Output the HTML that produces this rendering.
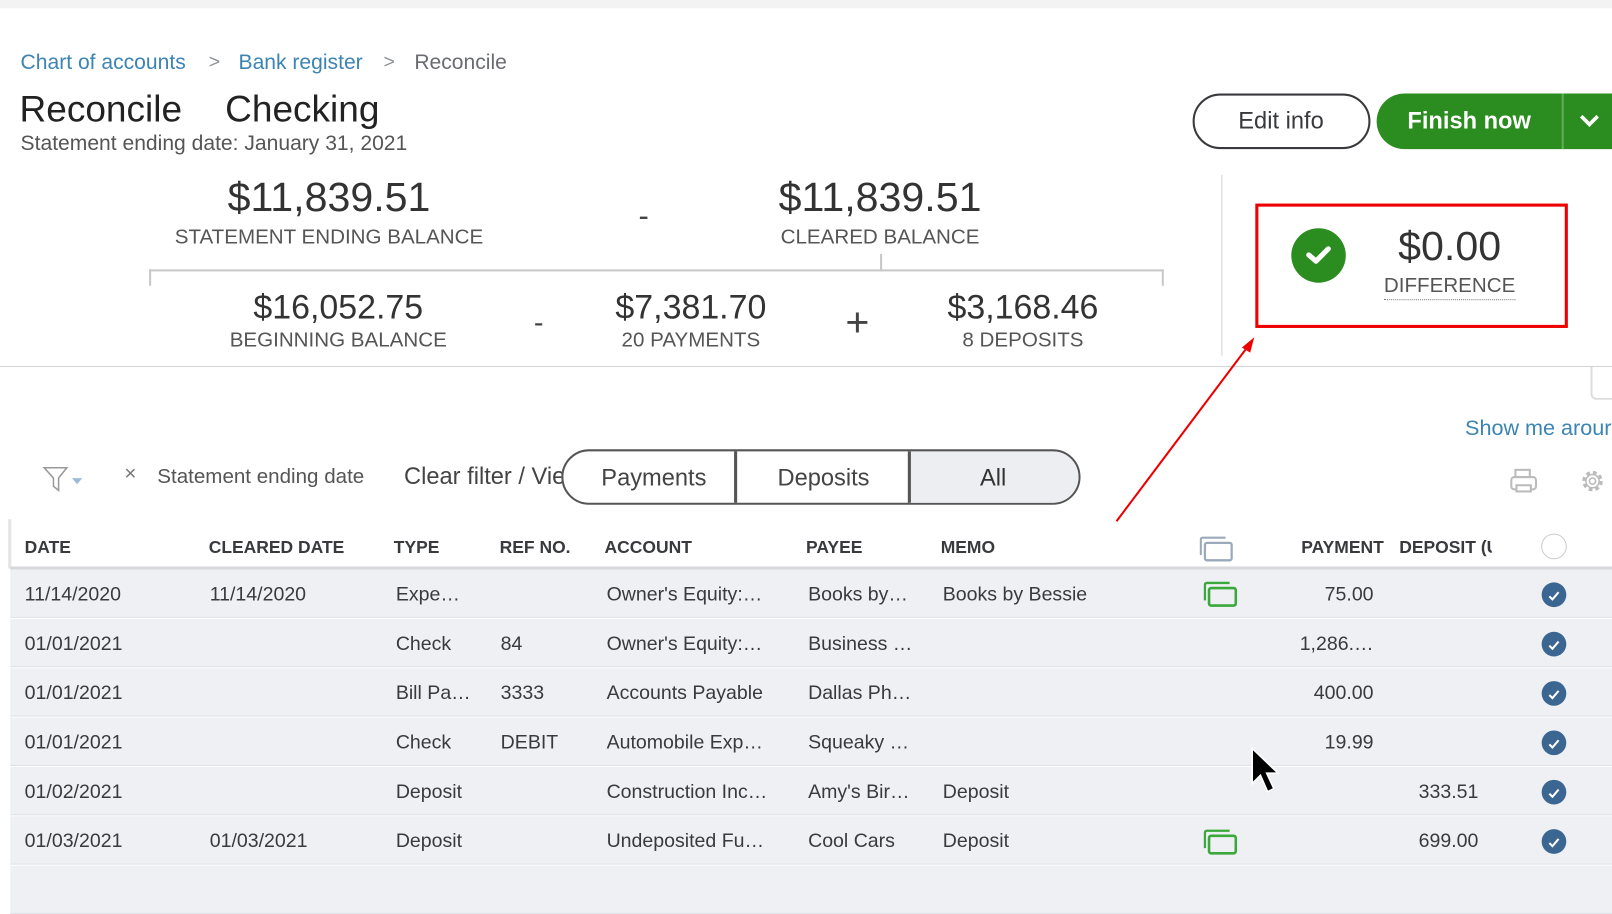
<!DOCTYPE html>
<html><head><meta charset="utf-8"><style>
*{margin:0;padding:0;box-sizing:border-box}
body{width:1612px;height:877px;overflow:hidden;background:#fff;font-family:"Liberation Sans",sans-serif;color:#393a3d;position:relative}
#w{position:absolute;left:0;top:0;width:1568px;height:853px;transform:scale(1.0281);transform-origin:0 0}
.a{position:absolute;white-space:nowrap;line-height:1}
.c{transform:translateX(-50%)}
.r{transform:translateX(-100%)}
.hd{font-weight:bold;font-size:17px;color:#393a3d}
.td{font-size:19px;color:#393a3d}
.row{position:absolute;left:10px;width:1602px;height:47px;background:#eef0f3;border-bottom:1px solid #dfe2e6}
</style></head><body><div id="w">
<div style="position:absolute;left:0;top:0;width:1612px;height:8px;background:#f3f3f4"></div>
<div class="a" style="left:20px;top:51px;font-size:20.5px;color:#3b84b3">Chart of accounts</div>
<div class="a" style="left:203px;top:51px;font-size:19px;color:#8d9096">&gt;</div>
<div class="a" style="left:232px;top:51px;font-size:20.5px;color:#3b84b3">Bank register</div>
<div class="a" style="left:373px;top:51px;font-size:19px;color:#8d9096">&gt;</div>
<div class="a" style="left:403px;top:51px;font-size:20.5px;color:#6b6c72">Reconcile</div>
<div class="a" style="left:19px;top:88px;font-size:36px;color:#222">Reconcile</div>
<div class="a" style="left:219px;top:88px;font-size:36px;color:#222">Checking</div>
<div class="a" style="left:20px;top:130px;font-size:20.5px;color:#555">Statement ending date: January 31, 2021</div>

<div class="a c" style="left:320px;top:172px;font-size:40px;color:#333">$11,839.51</div>
<div class="a c" style="left:320px;top:221px;font-size:20px;color:#555">STATEMENT ENDING BALANCE</div>
<div class="a c" style="left:626px;top:196px;font-size:30px;color:#444">-</div>
<div class="a c" style="left:856px;top:172px;font-size:40px;color:#333">$11,839.51</div>
<div class="a c" style="left:856px;top:221px;font-size:20px;color:#555">CLEARED BALANCE</div>
<div style="position:absolute;left:856px;top:247px;width:2px;height:17px;background:#c8c8c8"></div>
<div style="position:absolute;left:145px;top:262px;width:987px;height:2px;background:#c8c8c8"></div>
<div style="position:absolute;left:145px;top:262px;width:2px;height:16px;background:#c8c8c8"></div>
<div style="position:absolute;left:1130px;top:262px;width:2px;height:16px;background:#c8c8c8"></div>
<div class="a c" style="left:329px;top:282px;font-size:33px;color:#333">$16,052.75</div>
<div class="a c" style="left:329px;top:321px;font-size:20px;color:#555">BEGINNING BALANCE</div>
<div class="a c" style="left:524px;top:300px;font-size:28px;color:#444">-</div>
<div class="a c" style="left:672px;top:282px;font-size:33px;color:#333">$7,381.70</div>
<div class="a c" style="left:672px;top:321px;font-size:20px;color:#555">20 PAYMENTS</div>
<div class="a c" style="left:834px;top:294px;font-size:40px;color:#444">+</div>
<div class="a c" style="left:995px;top:282px;font-size:33px;color:#333">$3,168.46</div>
<div class="a c" style="left:995px;top:321px;font-size:20px;color:#555">8 DEPOSITS</div>

<div style="position:absolute;left:1188px;top:170px;width:1px;height:176px;background:#d4d4d4"></div>
<div style="position:absolute;left:0;top:356px;width:1594px;height:1px;background:#d4d4d4"></div>
<div style="position:absolute;left:1547px;top:357px;width:30px;height:32px;border-left:2px solid #ddd;border-bottom:2px solid #ddd;border-bottom-left-radius:6px"></div>

<div style="position:absolute;left:1160px;top:91px;width:173px;height:54px;border:2.5px solid #393a3d;border-radius:27px"></div>
<div class="a c" style="left:1246px;top:106px;font-size:23px;color:#393a3d">Edit info</div>
<div style="position:absolute;left:1339px;top:91px;width:290px;height:54px;background:#2b8c1f;border-radius:27px"></div>
<div style="position:absolute;left:1519px;top:91px;width:2px;height:54px;background:#5fae55"></div>
<div class="a c" style="left:1429px;top:106px;font-size:23px;font-weight:bold;color:#fff">Finish now</div>
<svg class="a" style="left:1535px;top:108px" width="22" height="18"><path d="M3 5 L11 13 L19 5" stroke="#fff" stroke-width="3.5" fill="none"/></svg>

<div style="position:absolute;left:1221px;top:198px;width:304px;height:121px;border:3px solid #ee0000"></div>
<div style="position:absolute;left:1256px;top:222px;width:53px;height:53px;border-radius:50%;background:#2b8c1f"></div>
<svg class="a" style="left:1268px;top:235px" width="30" height="26"><path d="M5 13 L12 19 L24 7" stroke="#fff" stroke-width="5" fill="none" stroke-linecap="round" stroke-linejoin="round"/></svg>
<div class="a c" style="left:1410px;top:220px;font-size:40px;color:#333">$0.00</div>
<div class="a c" style="left:1410px;top:268px;font-size:20px;color:#555;border-bottom:1px dotted #777;padding-bottom:3px">DIFFERENCE</div>
<svg class="a" style="left:1080px;top:322px" width="150" height="190"><path d="M6 185 L136 12" stroke="#ee0000" stroke-width="2"/><path d="M140 6 L128 16 L136 21 Z" fill="#ee0000"/></svg>

<div class="a" style="left:1425px;top:406px;font-size:21px;color:#3b84b3">Show me arour</div>

<svg class="a" style="left:40px;top:452px" width="46" height="28"><path d="M3 3 H25 L17 13 V25 L12 21 V13 Z" stroke="#999" stroke-width="1.5" fill="none"/><path d="M30 13 H40 L35 19 Z" fill="#9bbbd8"/></svg>
<div class="a" style="left:121px;top:451px;font-size:20px;color:#777">×</div>
<div class="a" style="left:153px;top:454px;font-size:20px;color:#555">Statement ending date</div>
<div class="a" style="left:393px;top:452px;font-size:23px;color:#444;width:155px;overflow:hidden">Clear filter / View all</div>
<div style="position:absolute;left:546px;top:437px;width:505px;height:54px;border:2.5px solid #555;border-radius:27px;overflow:hidden;background:#fff">
<div style="position:absolute;left:336px;top:0;width:170px;height:54px;background:#eceef1"></div>
<div style="position:absolute;left:166px;top:0;width:2.5px;height:54px;background:#555"></div>
<div style="position:absolute;left:335px;top:0;width:2.5px;height:54px;background:#555"></div>
</div>
<div class="a c" style="left:636px;top:453px;font-size:23px;color:#444">Payments</div>
<div class="a c" style="left:801px;top:453px;font-size:23px;color:#444">Deposits</div>
<div class="a c" style="left:966px;top:453px;font-size:23px;color:#333">All</div>
<svg class="a" style="left:1467px;top:454px" width="30" height="28"><rect x="7" y="3" width="14" height="7" fill="none" stroke="#bbb" stroke-width="2"/><rect x="3" y="10" width="24" height="12" rx="3" fill="none" stroke="#bbb" stroke-width="2"/><rect x="8" y="18" width="14" height="6" fill="#fff" stroke="#bbb" stroke-width="2"/></svg>
<svg class="a" style="left:1535px;top:454px" width="28" height="28"><circle cx="14" cy="14" r="8" fill="none" stroke="#bbb" stroke-width="4" stroke-dasharray="3.5 2.8"/><circle cx="14" cy="14" r="6.5" fill="none" stroke="#bbb" stroke-width="1.5"/><circle cx="14" cy="14" r="3" fill="none" stroke="#bbb" stroke-width="1.5"/></svg>

<div style="position:absolute;left:8px;top:505px;width:3px;height:48px;background:#e4e4e4"></div>
<div style="position:absolute;left:10px;top:551px;width:1602px;height:3px;background:#d6d8db"></div>
<div class="a hd" style="left:24px;top:524px">DATE</div>
<div class="a hd" style="left:203px;top:524px">CLEARED DATE</div>
<div class="a hd" style="left:383px;top:524px">TYPE</div>
<div class="a hd" style="left:486px;top:524px">REF NO.</div>
<div class="a hd" style="left:588px;top:524px">ACCOUNT</div>
<div class="a hd" style="left:784px;top:524px">PAYEE</div>
<div class="a hd" style="left:915px;top:524px">MEMO</div>
<svg class="a" style="left:1166px;top:520px" width="34" height="28"><path d="M2 20 V5 Q2 3 4 3 H26" stroke="#9aaabb" stroke-width="2" fill="none"/><rect x="6" y="8" width="26" height="17" rx="2" fill="none" stroke="#9aaabb" stroke-width="2.2"/></svg>
<div class="a hd r" style="left:1346px;top:524px">PAYMENT</div>
<div class="a hd" style="left:1361px;top:524px;width:90px;overflow:hidden">DEPOSIT (USD)</div>
<div style="position:absolute;left:1499px;top:519px;width:25px;height:25px;border-radius:50%;border:1px solid #ccc"></div>

<div class="row" style="top:554px"></div>
<div class="row" style="top:602px"></div>
<div class="row" style="top:650px"></div>
<div class="row" style="top:698px"></div>
<div class="row" style="top:746px"></div>
<div class="row" style="top:794px"></div>
<div class="row" style="top:842px"></div>

<div class="a td" style="left:24px;top:569px">11/14/2020</div><div class="a td" style="left:204px;top:569px">11/14/2020</div><div class="a td" style="left:385px;top:569px">Expe…</div><div class="a td" style="left:590px;top:569px">Owner's Equity:…</div><div class="a td" style="left:786px;top:569px">Books by…</div><div class="a td" style="left:917px;top:569px">Books by Bessie</div><div class="a td r" style="left:1336px;top:569px">75.00</div>
<div class="a td" style="left:24px;top:617px">01/01/2021</div><div class="a td" style="left:385px;top:617px">Check</div><div class="a td" style="left:487px;top:617px">84</div><div class="a td" style="left:590px;top:617px">Owner's Equity:…</div><div class="a td" style="left:786px;top:617px">Business …</div><div class="a td r" style="left:1336px;top:617px">1,286.…</div>
<div class="a td" style="left:24px;top:665px">01/01/2021</div><div class="a td" style="left:385px;top:665px">Bill Pa…</div><div class="a td" style="left:487px;top:665px">3333</div><div class="a td" style="left:590px;top:665px">Accounts Payable</div><div class="a td" style="left:786px;top:665px">Dallas Ph…</div><div class="a td r" style="left:1336px;top:665px">400.00</div>
<div class="a td" style="left:24px;top:713px">01/01/2021</div><div class="a td" style="left:385px;top:713px">Check</div><div class="a td" style="left:487px;top:713px">DEBIT</div><div class="a td" style="left:590px;top:713px">Automobile Exp…</div><div class="a td" style="left:786px;top:713px">Squeaky …</div><div class="a td r" style="left:1336px;top:713px">19.99</div>
<div class="a td" style="left:24px;top:761px">01/02/2021</div><div class="a td" style="left:385px;top:761px">Deposit</div><div class="a td" style="left:590px;top:761px">Construction Inc…</div><div class="a td" style="left:786px;top:761px">Amy's Bir…</div><div class="a td" style="left:917px;top:761px">Deposit</div><div class="a td r" style="left:1438px;top:761px">333.51</div>
<div class="a td" style="left:24px;top:809px">01/03/2021</div><div class="a td" style="left:204px;top:809px">01/03/2021</div><div class="a td" style="left:385px;top:809px">Deposit</div><div class="a td" style="left:590px;top:809px">Undeposited Fu…</div><div class="a td" style="left:786px;top:809px">Cool Cars</div><div class="a td" style="left:917px;top:809px">Deposit</div><div class="a td r" style="left:1438px;top:809px">699.00</div>

<svg class="a" style="left:1170px;top:564px" width="34" height="28"><path d="M2 20 V5 Q2 3 4 3 H26" stroke="#3aa83a" stroke-width="2.2" fill="none"/><rect x="6" y="8" width="26" height="17" rx="2" fill="none" stroke="#3aa83a" stroke-width="2.5"/></svg>
<svg class="a" style="left:1170px;top:805px" width="34" height="28"><path d="M2 20 V5 Q2 3 4 3 H26" stroke="#3aa83a" stroke-width="2.2" fill="none"/><rect x="6" y="8" width="26" height="17" rx="2" fill="none" stroke="#3aa83a" stroke-width="2.5"/></svg>

<svg class="a" style="left:1499px;top:566px" width="26" height="270">
<g fill="#3b6691"><circle cx="12.5" cy="12.5" r="12"/><circle cx="12.5" cy="60.5" r="12"/><circle cx="12.5" cy="108.5" r="12"/><circle cx="12.5" cy="156.5" r="12"/><circle cx="12.5" cy="204.5" r="12"/><circle cx="12.5" cy="252.5" r="12"/></g>
<g stroke="#fff" stroke-width="2" fill="none"><path d="M8 14 L11 17 L17 10"/><path d="M8 62 L11 65 L17 58"/><path d="M8 110 L11 113 L17 106"/><path d="M8 158 L11 161 L17 154"/><path d="M8 206 L11 209 L17 202"/><path d="M8 254 L11 257 L17 250"/></g>
</svg>

<svg class="a" style="left:1215px;top:726px" width="40" height="50"><path d="M3 2 L3 36 L11 28 L18 44 L24 41 L17 26 L28 26 Z" fill="#000" stroke="#fff" stroke-width="1.5"/></svg>
</div></body></html>
